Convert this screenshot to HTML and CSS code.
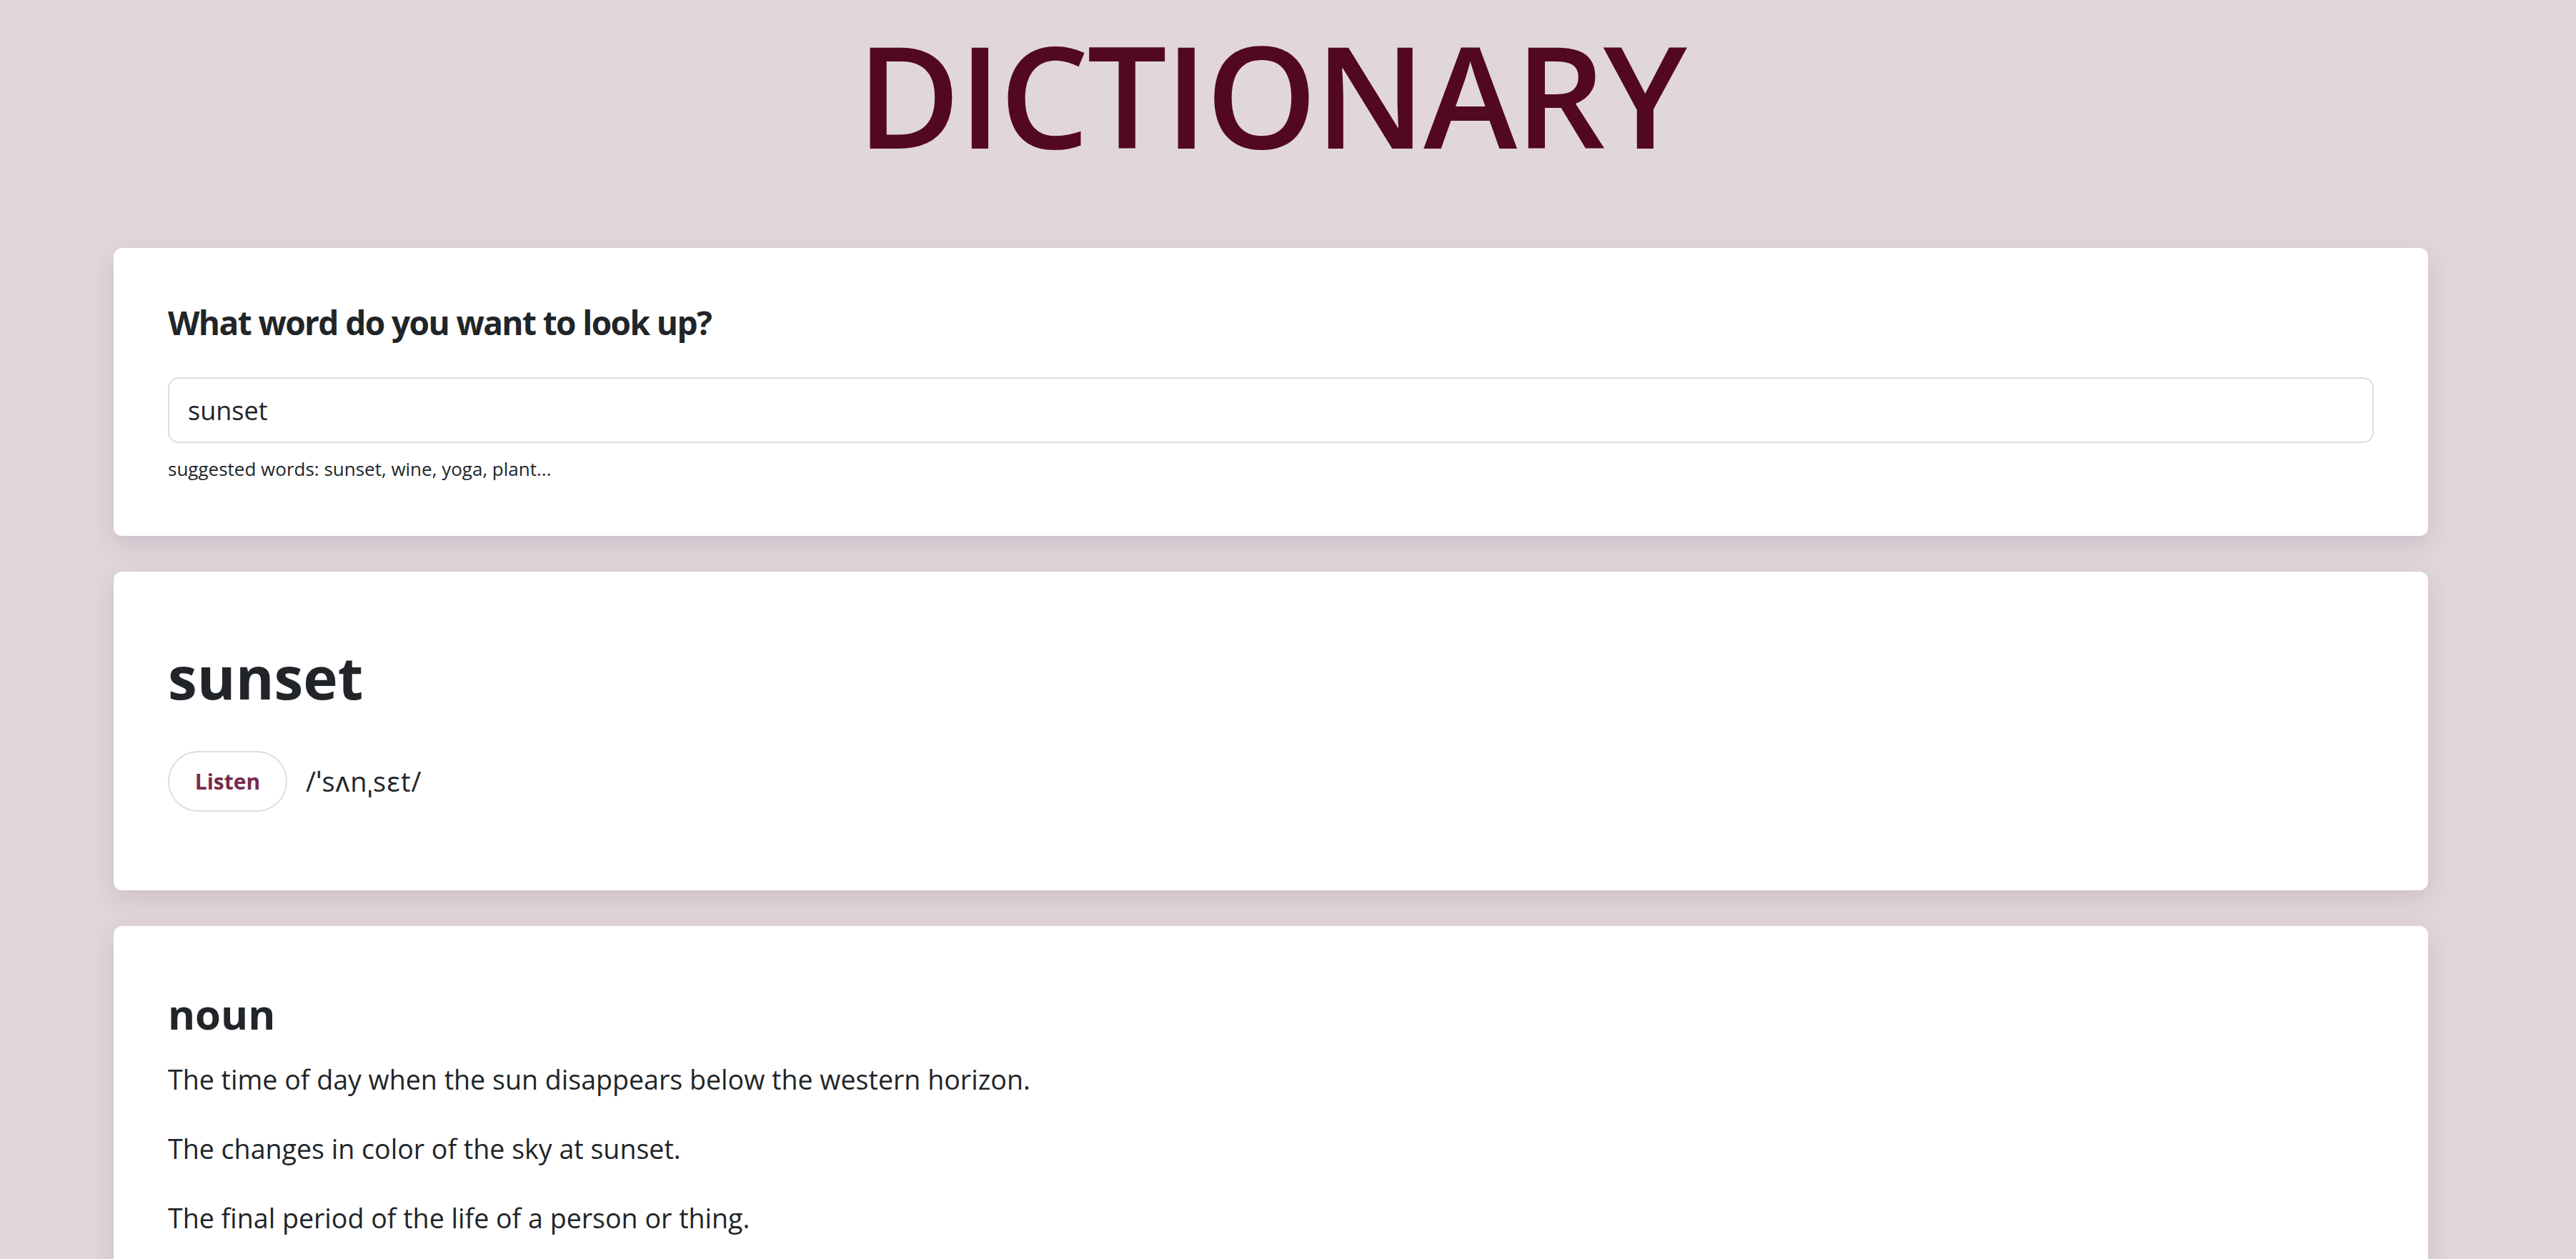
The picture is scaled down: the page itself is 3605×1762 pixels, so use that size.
FILE: index.html
```html
<!DOCTYPE html>
<html lang="en">
<head>
<meta charset="utf-8">
<title>Dictionary</title>
<link rel="stylesheet" href="styles.css">
</head>
<body>
<div class="page">
  <div class="container">
    <h1 class="title">DICTIONARY</h1>

    <section class="card search-card">
      <h2 class="search-label">What word do you want to look up?</h2>
      <input class="search-input" type="search" value="sunset" aria-label="Word">
      <div class="hint">suggested words: sunset, wine, yoga, plant...</div>
    </section>

    <section class="card word-card">
      <h1 class="word">sunset</h1>
      <div class="phonetic-row">
        <button class="listen" type="button">Listen</button>
        <span class="phonetic">/ˈsʌnˌsɛt/</span>
      </div>
    </section>

    <section class="card meaning-card">
      <h3 class="pos">noun</h3>
      <p class="definition">The time of day when the sun disappears below the western horizon.</p>
      <p class="definition">The changes in color of the sky at sunset.</p>
      <p class="definition">The final period of the life of a person or thing.</p>
    </section>
  </div>
</div>
</body>
</html>
```

FILE: styles.css
```css
* {
  box-sizing: border-box;
}

html, body {
  margin: 0;
  padding: 0;
}

body {
  background: #e1d6dc;
  color: #212529;
  font-family: "Open Sans", "Noto Sans", "DejaVu Sans", sans-serif;
  overflow: hidden;
}

.page {
  padding-left: 159px;
}

.container {
  width: 3239px;
  display: flex;
  flex-direction: column;
}

.title {
  margin: 33px 0 0;
  font-size: 198px;
  line-height: 196px;
  font-weight: 600;
  text-align: center;
  color: #520823;
  height: 196px;
  letter-spacing: -3px;
}

.card {
  background: #ffffff;
  border-radius: 12px;
  box-shadow: 0 12px 34px rgba(90, 50, 70, 0.14);
  padding: 76px 76px 74px;
}

.search-card {
  margin-top: 118px;
}

.search-label {
  margin: 0;
  font-size: 46px;
  line-height: 57px;
  font-weight: 700;
  letter-spacing: -1.6px;
}

.search-input {
  display: block;
  width: 100%;
  height: 92px;
  margin-top: 48px;
  padding: 0 26px;
  border: 2px solid #dedcdd;
  border-radius: 15px;
  font-family: inherit;
  font-size: 36px;
  color: #212529;
  background: #fff;
  outline: none;
}

.hint {
  margin-top: 17px;
  font-size: 26px;
  line-height: 39px;
}

.word-card {
  margin-top: 50px;
  padding-bottom: 110px;
}

.word {
  margin: 20px 0 0;
  font-size: 82px;
  line-height: 102px;
  font-weight: 700;
}

.phonetic-row {
  margin-top: 53px;
  display: flex;
  align-items: center;
  gap: 26px;
}

.listen {
  height: 85px;
  width: 167px;
  border: 2px solid #dfdddd;
  border-radius: 43px;
  background: #fff;
  color: #772b4e;
  font-family: inherit;
  font-size: 30px;
  font-weight: 700;
  padding: 0;
}

.phonetic {
  font-size: 38px;
  line-height: 1.5;
  letter-spacing: 1.2px;
}

.meaning-card {
  margin-top: 50px;
  padding-bottom: 120px;
}

.pos {
  margin: 10px 0 0;
  font-size: 58px;
  line-height: 73px;
  font-weight: 700;
}

.definition {
  margin: 0 0 41px;
  font-size: 37.6px;
  line-height: 56px;
}

.pos + .definition {
  margin-top: 28px;
}
```
